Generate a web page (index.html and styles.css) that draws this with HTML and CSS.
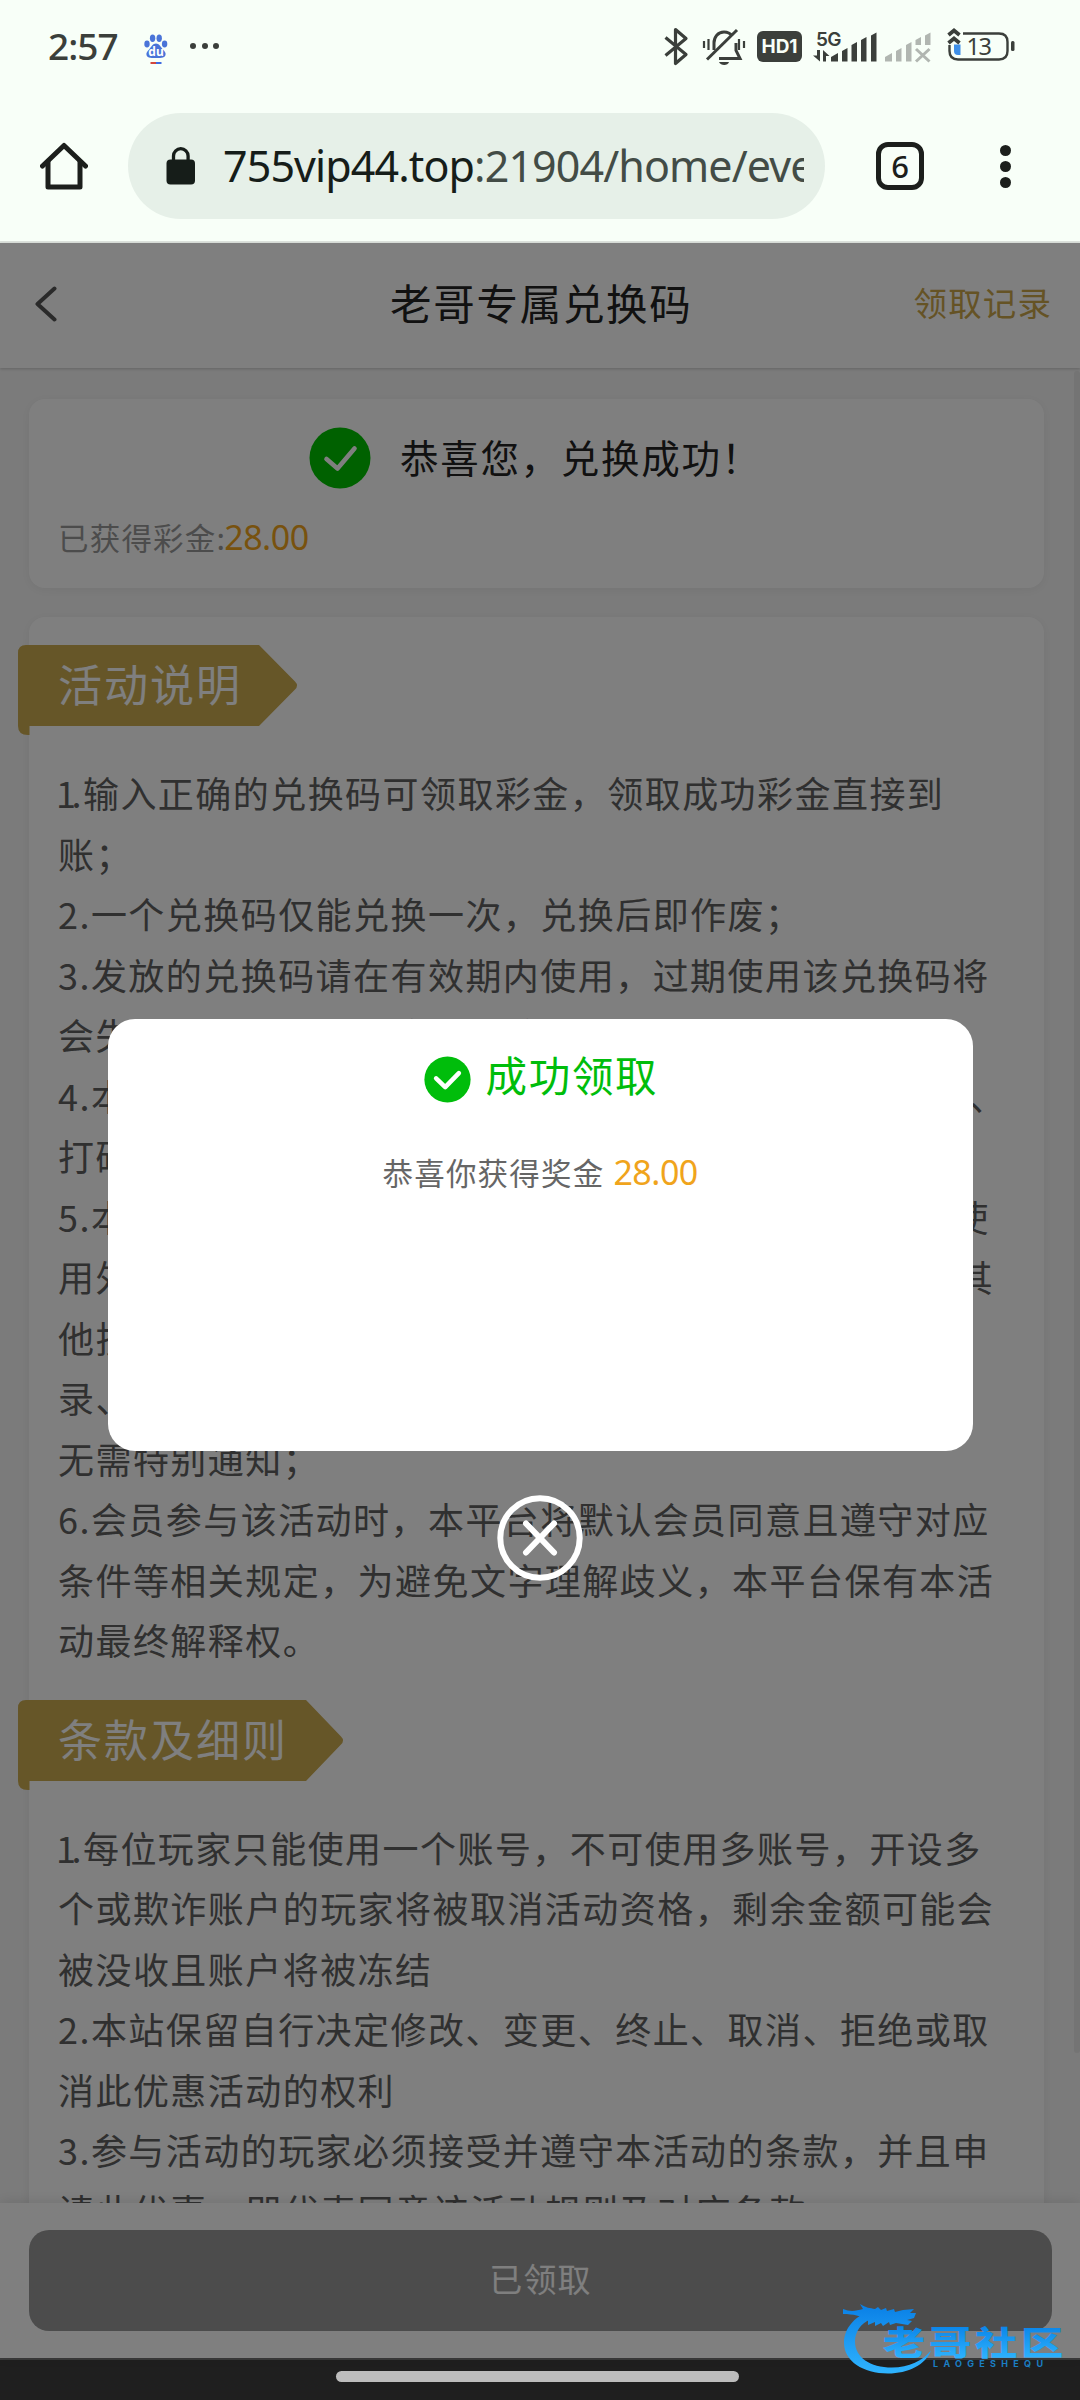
FILE: index.html
```html
<!DOCTYPE html>
<html lang="zh-CN">
<head>
<meta charset="utf-8">
<title>老哥专属兑换码</title>
<link rel="stylesheet" href="styles.css">
</head>
<body>
<div class="phone">
  <header class="statusbar">
    <span class="clock">2:57</span>
    <svg class="paw" width="24" height="34" viewBox="0 0 24 34">
      <g fill="#4a74d8">
        <ellipse cx="8.6" cy="4.2" rx="2.7" ry="3.7"/><ellipse cx="15.2" cy="4.2" rx="2.7" ry="3.7"/>
        <ellipse cx="3" cy="10" rx="2.7" ry="3.4"/><ellipse cx="20.6" cy="10" rx="2.7" ry="3.4"/>
        <path d="M12 9.500c3 0 4.500 3 6.500 5.500 2.500 2.500 3.500 4 3 6-.5 2.500-3 3-9.500 3s-9-.5-9.500-3c-.5-2 .5-3.500 3-6C7.500 12.500 9 9.500 12 9.500z"/>
      </g>
      <text x="12" y="21.500" class="paw-text">du</text>
      <path d="M6.500 29H12" stroke="#d2483c" stroke-width="2"/><path d="M12 29h5.500" stroke="#3f6be0" stroke-width="2"/>
    </svg>
    <span class="more"><i></i><i></i><i></i></span>
    <svg class="indicators" width="360" height="44" viewBox="660 24 360 44" fill="none" stroke="#3b3f3b">
      <path d="M665.500 37.500l20.500 17-10.500 9V29.500l10.500 9-20.500 17" stroke-width="3.200" stroke-linejoin="round"/>
      <g stroke-width="3">
        <path d="M714 50V43c0-6 4-11 10-11 4 0 6 1 8 4M719 58.500h21l-4-8V43"/>
        <path d="M707 59.500L737 30"/>
        <path d="M704 41v7M708.500 39v11M739 39v11M744 41v7" stroke-width="2.200"/>
        <path d="M719 62h10c-1 4-8.500 4-10 0z" fill="#3b3f3b" stroke="none"/>
      </g>
      <rect x="757" y="31" width="45" height="31" rx="6" fill="#3b3f3b" stroke="none"/>
      <text x="779.500" y="53.300" class="hd">HD1</text>
      <text x="828.500" y="45.500" class="fiveg">5G</text>
      <g fill="#3b3f3b" stroke="none">
        <path d="M817 50h3v11.500l-7-6h4zM823 61.500V50l6.500 6H826v5.500z"/>
        <path d="M831 61.500V57l7-4v8.500zM842 61.500V51l5.500-3v13.500zM851.500 61.500V45l5.500-3v19.500zM861 61.500V40l5.500-3v24.500zM871 61.500V35.500l5.500-3v29z"/>
      </g>
      <g fill="#b1b6b1" stroke="none">
        <path d="M885 61.500V57l7-4v8.500zM896 61.500V51l5.500-3v13.500zM906 61.500V45l5.500-3v19.500zM915.500 45v-5l5.500-3v8zM925 45v-9.500l5.500-3V45z"/>
      </g>
      <path d="M916 49l13.500 12.500M929.500 49L916 61.500" stroke="#b1b6b1" stroke-width="3"/>
      <path d="M963 33.500h36q8.500 0 8.500 8.500v9q0 8.500-8.500 8.500h-41q-8.500 0-8.500-8.500v-6" stroke-width="2.400"/>
      <rect x="1011" y="41" width="3.500" height="10" rx="1.500" fill="#3b3f3b" stroke="none"/>
      <path d="M954 44.500h6.500V55H958q-4 0-4-4z" fill="#3f8fe8" stroke="none"/>
      <path d="M948.500 35l5.500-4.500 5.500 4.500M948.500 43l5.500-4.500 5.500 4.500" stroke-width="3.800"/>
      <text x="978.500" y="55" class="pct">13</text>
    </svg>
  </header>

  <div class="toolbar">
    <svg class="home" width="48" height="48" viewBox="0 0 48 48" fill="none" stroke="#1c1f1c" stroke-width="5" stroke-linejoin="round" stroke-linecap="round">
      <path d="M2.500 24L24 3.500 45.500 24"/><path d="M8 20v25h32V20"/>
    </svg>
    <div class="address">
      <svg width="30" height="38" viewBox="0 0 30 38"><rect x="0.500" y="12.500" width="28.500" height="25" rx="4" fill="#161d19"/><path d="M7.500 13V9a7.300 7.300 0 0 1 14.600 0v4" fill="none" stroke="#161d19" stroke-width="3.300"/></svg>
      <div class="url"><b>755vip44.top</b>:21904/home/eve</div>
    </div>
    <div class="tabs">6</div>
    <div class="menu"><i></i><i></i><i></i></div>
  </div>

  <main class="page">
    <div class="nav">
      <svg width="22" height="36" viewBox="0 0 22 36" fill="none" stroke="#555" stroke-width="4" stroke-linecap="round" stroke-linejoin="round"><path d="M19.500 2.500L2.500 18l17 15.500"/></svg>
      <h1>老哥专属兑换码</h1>
      <a class="records">领取记录</a>
    </div>

    <div class="content">
      <section class="card result">
        <div class="result-title">
          <svg width="62" height="62" viewBox="0 0 62 62"><circle cx="31" cy="31" r="30.500" fill="#00c200"/><path d="M17.500 32l11 9.500L45.500 21.500" fill="none" stroke="#fff" stroke-width="4.600" stroke-linecap="round" stroke-linejoin="round"/></svg>
          <span>恭喜您，兑换成功！</span>
        </div>
        <p class="result-sum">已获得彩金:<b>28.00</b></p>
      </section>

      <section class="card rules">
        <div class="ribbon">
          <svg width="280" height="90" viewBox="0 0 280 90"><path d="M8 0h233l36 36.500q4 4 0 8L241 81H11.500v9H10Q0 90 0 81V8Q0 0 8 0z" fill="#ccac50"/></svg>
          <h2>活动说明</h2>
        </div>
        <div class="text">
          <p><span class="one">1</span>.输入正确的兑换码可领取彩金，领取成功彩金直接到<br>账；</p>
          <p>2.一个兑换码仅能兑换一次，兑换后即作废；</p>
          <p>3.发放的兑换码请在有效期内使用，过期使用该兑换码将<br>会失效，不予任何补发及兑换；</p>
          <p>4.本活动所赠彩金需<span class="narrow">1</span>倍流水即可提款，即审核投注金额、<br>打码不限平台；</p>
          <p>5.本活动仅限账号本人进行正常真人娱乐，禁止租借、使<br>用外挂、机器人、不同账号对赌、互刷、套利、接口或其<br>他技术手段参与，否则将取消奖励并冻结账户，限制登<br>录、提款等功能，本平台有权随时调整，<br>无需特别通知；</p>
          <p>6.会员参与该活动时，本平台将默认会员同意且遵守对应<br>条件等相关规定，为避免文字理解歧义，本平台保有本活<br>动最终解释权。</p>
        </div>
        <div class="ribbon second">
          <svg width="326" height="90" viewBox="0 0 326 90"><path d="M8 0h280l35 36.500q4 4 0 8L288 81H11.500v9H10Q0 90 0 81V8Q0 0 8 0z" fill="#ccac50"/></svg>
          <h2>条款及细则</h2>
        </div>
        <div class="text">
          <p><span class="one">1</span>.每位玩家只能使用一个账号，不可使用多账号，开设多<br>个或欺诈账户的玩家将被取消活动资格，剩余金额可能会<br>被没收且账户将被冻结</p>
          <p>2.本站保留自行决定修改、变更、终止、取消、拒绝或取<br>消此优惠活动的权利</p>
          <p>3.参与活动的玩家必须接受并遵守本活动的条款，并且申<br>请此优惠，即代表同意该活动规则及对应条款</p>
        </div>
      </section>
      <div class="scrollbar"></div>
    </div>

    <div class="actions"><button>已领取</button></div>

    <div class="overlay">
      <div class="modal">
        <div class="modal-title">
          <svg width="47" height="47" viewBox="0 0 62 62"><circle cx="31" cy="31" r="30.500" fill="#00bd0b"/><path d="M16 29.500l12 11.500L46 22.500" fill="none" stroke="#fff" stroke-width="6" stroke-linecap="round" stroke-linejoin="round"/></svg>
          <span>成功领取</span>
        </div>
        <p>恭喜你获得奖金<b>28.00</b></p>
      </div>
      <svg class="close" width="86" height="86" viewBox="0 0 86 86" fill="none" stroke="#fff" stroke-width="6" stroke-linecap="round"><circle cx="43" cy="43" r="39.700"/><path d="M29 28.500l28 29M57 28.500l-28 29"/></svg>
    </div>
  </main>

  <footer class="gesture"><i></i></footer>

  <div class="watermark">
    <svg width="225" height="75" viewBox="842 2303 225 75">
      <defs><linearGradient id="wm" x1="0" y1="2305" x2="0" y2="2374" gradientUnits="userSpaceOnUse"><stop offset="0" stop-color="#0a80e6"/><stop offset="1" stop-color="#2fb4ff"/></linearGradient>
      <linearGradient id="wt" x1="0" y1="-29" x2="0" y2="2" gradientUnits="userSpaceOnUse"><stop offset="0" stop-color="#0a84e8"/><stop offset="1" stop-color="#2cb0fc"/></linearGradient></defs>
      <g fill="url(#wm)">
        <path d="M868 2312c-14 5-24 17-24 31 0 18 19 30.500 44 30.500 20 0 38-9 43-23-8 10-22 17-39 17-22 0-37-10-37-26 0-10 6-18 15-22l9-1z"/>
        <path d="M843 2309c7 3 13 2 20 0l-3-5c6 4 10 4 15 5l3-2 3 3 5-2 1 3 7-2 1 3 8-2 11-1-4 4 6 0-2 5-7 2 5 1-4 4-12-2-6 2-1-3-6 4-2-3-6 3v-4l-7 3 0-5c-8-4-14-6-25-6z"/>
      </g>
      <text transform="translate(975 2354.500) scale(1.280 1)" class="wm-name" fill="url(#wt)">老哥社区</text>
      <text x="933" y="2366.500" class="wm-latin" textLength="110">LAOGESHEQU</text>
    </svg>
  </div>
</div>
</body>
</html>
```
FILE: styles.css
```css
* { box-sizing: border-box; margin: 0; padding: 0; }

body {
  width: 1080px;
  height: 2400px;
  overflow: hidden;
  font-family: "Noto Sans CJK SC", "Noto Sans", sans-serif;
}

b { font-weight: 400; }
svg { display: block; flex: none; }

.phone {
  position: relative;
  display: flex;
  flex-direction: column;
  height: 2400px;
  background: #f8fff8;
}

/* Status bar */
.statusbar {
  display: flex;
  align-items: center;
  height: 92px;
  padding: 0 60px 0 48px;
}
.clock {
  width: 96px;
  font: 500 37px/92px "Noto Sans", sans-serif;
  letter-spacing: -1px;
  color: #3b3f3b;
}
.paw { margin-top: 9px; }
.paw-text { font: 700 12px "Noto Sans", sans-serif; fill: #fff; text-anchor: middle; }
.more { display: flex; gap: 5.500px; margin: 0 0 0 22px; }
.more i { width: 6px; height: 6px; border-radius: 50%; background: #3b3f3b; }
.indicators { margin-left: auto; }
.indicators text { stroke: none; fill: #3b3f3b; text-anchor: middle; }
.indicators .hd { font: 700 19px "Inter", sans-serif; fill: #f8fff8; }
.indicators .fiveg { font: 600 19px "Inter", sans-serif; letter-spacing: -0.500px; }
.indicators .pct { font: 400 23.500px "Noto Sans", sans-serif; letter-spacing: -1.500px; }

/* Browser toolbar */
.toolbar {
  display: flex;
  align-items: center;
  height: 151px;
  padding: 0 69px 1px 40px;
  border-bottom: 2px solid #dde3dd;
}
.address {
  display: flex;
  align-items: center;
  width: 697px;
  height: 106px;
  margin-left: 40px;
  padding: 0 21px 0 38px;
  border-radius: 53px;
  background: #e6f0e8;
}
.url {
  flex: 1;
  margin-left: 27px;
  overflow: hidden;
  white-space: nowrap;
  font: 400 43px/60px "Noto Sans", sans-serif;
  letter-spacing: -0.900px;
  color: #434c46;
}
.url b { color: #161d19; }
.tabs {
  width: 48px;
  height: 48px;
  margin-left: 51px;
  border: 5px solid #1c1f1c;
  border-radius: 12px;
  text-align: center;
  font: 500 31px/38px "Noto Sans", sans-serif;
  color: #1c1f1c;
}
.menu { display: flex; flex-direction: column; gap: 5px; margin-left: auto; }
.menu i { width: 11px; height: 11px; border-radius: 50%; background: #1c1f1c; }

/* Page */
.page {
  position: relative;
  display: flex;
  flex-direction: column;
  height: 2115px;
  background: #f7f7f7;
}
.nav {
  display: flex;
  align-items: center;
  justify-content: space-between;
  height: 125px;
  padding: 0 28px 3px 35px;
  background: #fff;
  box-shadow: 0 1px 3px rgba(0, 0, 0, .2);
  z-index: 1;
}
.nav h1 {
  margin-left: 112px;
  padding-bottom: 5px;
  font-weight: 400;
  font-size: 41.500px;
  letter-spacing: 1.700px;
  color: #222;
}
.records { padding-bottom: 6px; font-size: 33.500px; letter-spacing: 1.100px; color: #cba64b; }

.content {
  position: relative;
  flex: 1;
  overflow: hidden;
  padding: 31px 36px 0 29px;
}
.card {
  border-radius: 16px;
  background: #fff;
  box-shadow: 0 2px 12px rgba(0, 0, 0, .06);
}
.result { height: 189px; padding-top: 28px; }
.result-title {
  display: flex;
  align-items: center;
  gap: 29px;
  height: 62px;
  padding-left: 280px;
  font-size: 38.500px;
  letter-spacing: 1.700px;
  color: #222;
}
.result-title span { padding-bottom: 5px; }
.result-sum {
  margin: 26px 0 0 29px;
  font-size: 30.500px;
  line-height: 44px;
  letter-spacing: 1.200px;
  color: #999;
}
.result-sum b, .modal p b {
  font-family: "Noto Sans", sans-serif;
  font-size: 34px;
  letter-spacing: -0.500px;
  color: #f0a41c;
}
.result-sum b { margin-left: -2px; }

.rules { height: 1900px; margin-top: 29px; padding-top: 28px; }
.ribbon { display: grid; height: 90px; margin-left: -11px; }
.ribbon > * { grid-area: 1 / 1; }
.ribbon h2 {
  padding-left: 40px;
  font-weight: 400;
  font-size: 44px;
  line-height: 76px;
  letter-spacing: 2px;
  color: #fff;
}
.text {
  margin: 27px 0 0 29px;
  white-space: nowrap;
  font-size: 36px;
  line-height: 60.500px;
  letter-spacing: 1.450px;
  color: #606060;
}
.one { margin-left: -2px; letter-spacing: -4.500px; }
.narrow { letter-spacing: -3px; }
.second { margin-top: 30px; }
.scrollbar {
  position: absolute;
  top: 3px;
  right: 0;
  width: 6px;
  height: 1682px;
  border-radius: 3px;
  background: #e8e8e8;
}

.actions {
  height: 155px;
  padding: 27px 28px 0 29px;
  background: #fff;
  box-shadow: 0 -2px 12px rgba(0, 0, 0, .1);
  z-index: 1;
}
.actions button {
  display: block;
  width: 1023px;
  height: 101px;
  padding-bottom: 5px;
  border: 0;
  border-radius: 20px;
  background: #999;
  font-family: inherit;
  font-size: 33px;
  letter-spacing: 1.200px;
  color: #fff;
}

/* Dialog */
.overlay {
  position: absolute;
  inset: 0;
  z-index: 2;
  display: flex;
  flex-direction: column;
  align-items: center;
  padding-top: 776px;
  background: rgba(0, 0, 0, .5);
}
.modal {
  width: 865px;
  height: 432px;
  padding-top: 33px;
  border-radius: 27px;
  background: #fff;
}
.modal-title {
  display: flex;
  align-items: center;
  gap: 15px;
  height: 54px;
  padding-left: 316px;
  font-size: 41.500px;
  letter-spacing: 1.700px;
  color: #00bd0b;
}
.modal-title span { padding-bottom: 10px; }
.modal p {
  margin-top: 44px;
  padding-left: 275px;
  font-size: 30.500px;
  line-height: 44px;
  letter-spacing: 1.200px;
  color: #666;
}
.modal p b { margin-left: 9px; }
.close { margin-top: 44px; }

.gesture {
  flex: 1;
  padding-top: 11px;
  border-top: 2px solid #3a3a3a;
  background: #1f1f1f;
}
.gesture i {
  display: block;
  width: 403px;
  height: 10.500px;
  margin-left: 336px;
  border-radius: 6px;
  background: #bdbdbd;
}

.watermark { position: absolute; left: 842px; top: 2303px; z-index: 3; }
.wm-name { font: 900 33px "Noto Sans CJK SC", sans-serif; text-anchor: middle; letter-spacing: 3px; }
.wm-latin { font: 700 9px "Inter", sans-serif; fill: #1b7fc4; }
```
